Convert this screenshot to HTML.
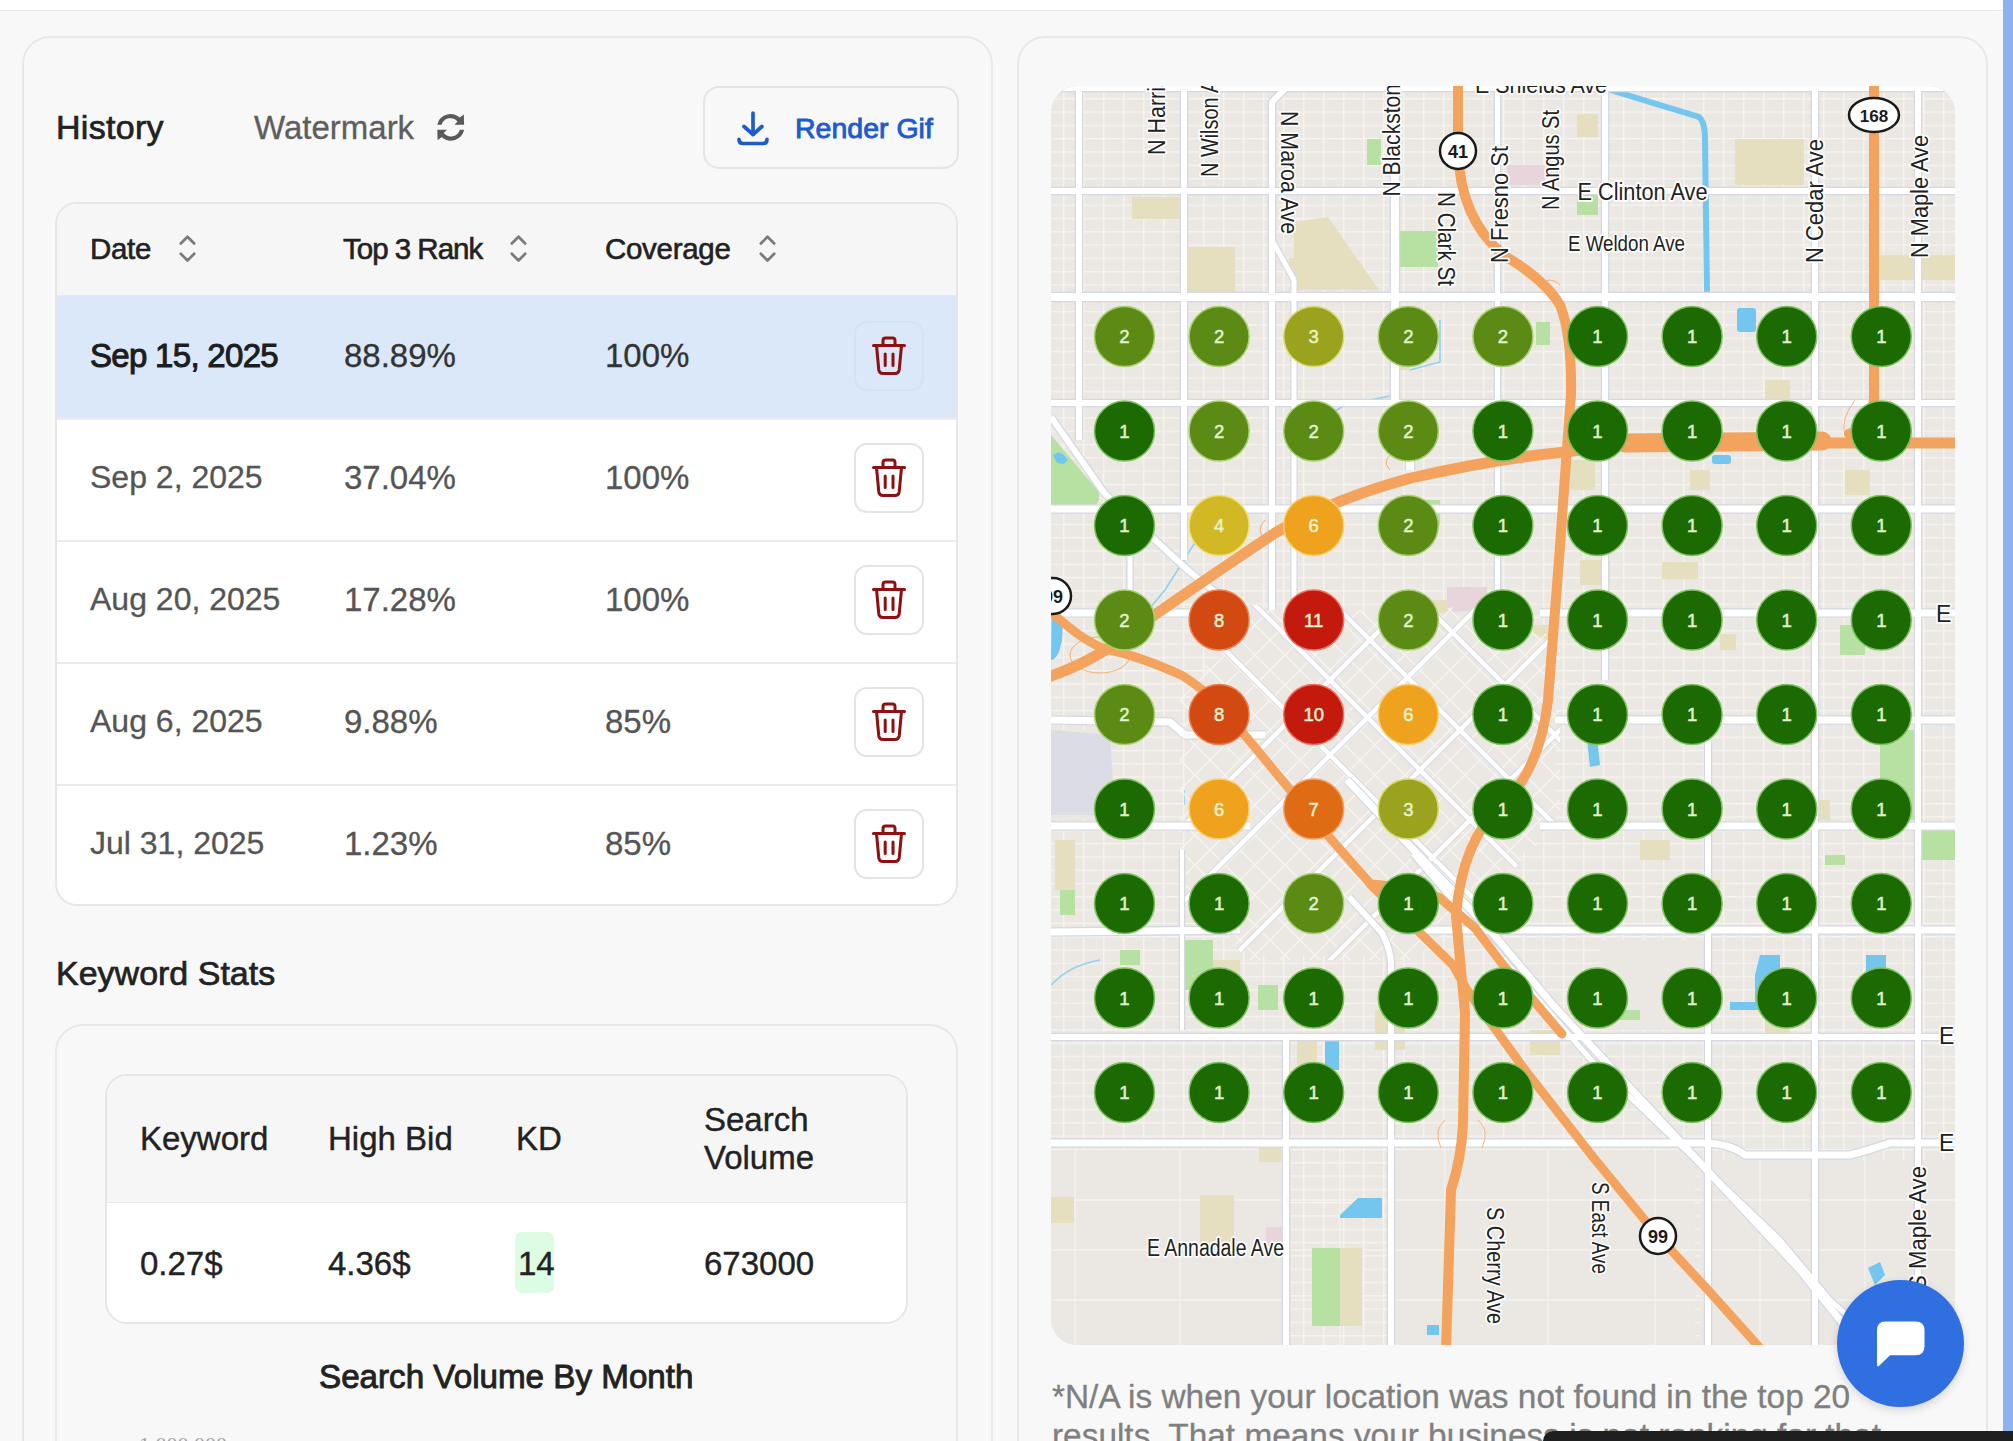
<!DOCTYPE html><html><head><meta charset="utf-8"><style>
html,body{margin:0;padding:0;}
body{width:2013px;height:1441px;overflow:hidden;position:relative;background:#f8f8f8;font-family:"Liberation Sans", sans-serif;}
.t{position:absolute;white-space:nowrap;line-height:1;}
.ab{position:absolute;}
.box{position:absolute;box-sizing:border-box;}
.tbtn{position:absolute;width:70px;height:70px;box-sizing:border-box;border:2px solid #e4e4e4;border-radius:13px;}
</style></head><body>
<div class="box" style="left:0;top:0;width:2013px;height:11px;background:#fff;border-bottom:1.5px solid #e6e6e6"></div>
<div class="box" style="left:22px;top:36px;width:971px;height:1500px;border:2px solid #e8e8e8;border-radius:28px;background:#f8f8f8"></div>
<div class="box" style="left:1017px;top:36px;width:971px;height:1500px;border:2px solid #e8e8e8;border-radius:28px;background:#f8f8f8"></div>
<div class="box" style="left:2003px;top:0;width:10px;height:1441px;background:#8db3ee"></div>
<div class="t" style="left:56px;top:109.7px;font-size:34px;font-weight:400;color:#222;letter-spacing:0.3px;-webkit-text-stroke:0.7px #222;">History</div>
<div class="t" style="left:254px;top:110.6px;font-size:33px;font-weight:400;color:#5e5e5e;letter-spacing:0px;-webkit-text-stroke:0.3px #5e5e5e;">Watermark</div>
<svg class="ab" style="left:430px;top:105px" width="42" height="42" viewBox="0 0 42 42"><g fill="#5a5a5a"><path id="ra" d="M7.3 19.8 A13.4 13.4 0 0 1 29.6 12.6 L33.8 9.4 L34.1 19.8 L24.5 19.8 L27.6 16.6 A9.2 9.2 0 0 0 11.6 19.8 Z"/><path d="M7.3 19.8 A13.4 13.4 0 0 1 29.6 12.6 L33.8 9.4 L34.1 19.8 L24.5 19.8 L27.6 16.6 A9.2 9.2 0 0 0 11.6 19.8 Z" transform="rotate(180 20.7 22.3)"/></g></svg>
<div class="box" style="left:703px;top:86px;width:256px;height:83px;border:2px solid #e4e4e4;border-radius:16px"></div>
<svg class="ab" style="left:733px;top:108px" width="42" height="42" viewBox="0 0 42 42"><g fill="none" stroke="#1f5cc9" stroke-width="3.7" stroke-linecap="round" stroke-linejoin="round"><path d="M20 5.1 V26"/><path d="M11 18.5 L20 26.5 L28.9 18.5"/><path d="M6 31.4 V31.5 Q6 35.5 10 35.5 H30 Q34 35.5 34 31.5 V31.4"/></g></svg>
<div class="t" style="left:795px;top:113.6px;font-size:28.5px;font-weight:400;color:#1f5cc9;letter-spacing:0px;-webkit-text-stroke:0.9px #1f5cc9;">Render Gif</div>
<div class="box" style="left:55px;top:202px;width:903px;height:704px;border:2px solid #e6e6e6;border-radius:22px;background:#fff;overflow:hidden"><div style="position:absolute;left:0;top:0;width:100%;height:91px;background:#f6f6f6;border-bottom:1.5px solid #e8e8e8"></div><div style="position:absolute;left:0;top:92px;width:100%;height:122px;background:#dbe8fa"></div><div style="position:absolute;left:0;top:214px;width:100%;height:2px;background:#ececec"></div><div style="position:absolute;left:0;top:336px;width:100%;height:2px;background:#ececec"></div><div style="position:absolute;left:0;top:458px;width:100%;height:2px;background:#ececec"></div><div style="position:absolute;left:0;top:580px;width:100%;height:2px;background:#ececec"></div></div>
<div class="t" style="left:90px;top:234.0px;font-size:29.5px;font-weight:400;color:#222;letter-spacing:-0.3px;-webkit-text-stroke:0.6px #222;">Date</div>
<svg class="ab" style="left:178px;top:234px" width="18" height="28" viewBox="0 0 18 28"><g fill="none" stroke="#7a7a7a" stroke-width="2.7" stroke-linecap="round" stroke-linejoin="round"><path d="M2.8 9.5 L9.5 2.8 L16.2 9.5"/><path d="M2.8 19.8 L9.5 26.5 L16.2 19.8"/></g></svg>
<div class="t" style="left:343px;top:234.0px;font-size:29.5px;font-weight:400;color:#222;letter-spacing:-1.0px;-webkit-text-stroke:0.6px #222;">Top 3 Rank</div>
<svg class="ab" style="left:509px;top:234px" width="18" height="28" viewBox="0 0 18 28"><g fill="none" stroke="#7a7a7a" stroke-width="2.7" stroke-linecap="round" stroke-linejoin="round"><path d="M2.8 9.5 L9.5 2.8 L16.2 9.5"/><path d="M2.8 19.8 L9.5 26.5 L16.2 19.8"/></g></svg>
<div class="t" style="left:605px;top:234.0px;font-size:29.5px;font-weight:400;color:#222;letter-spacing:-0.3px;-webkit-text-stroke:0.6px #222;">Coverage</div>
<svg class="ab" style="left:758px;top:234px" width="18" height="28" viewBox="0 0 18 28"><g fill="none" stroke="#7a7a7a" stroke-width="2.7" stroke-linecap="round" stroke-linejoin="round"><path d="M2.8 9.5 L9.5 2.8 L16.2 9.5"/><path d="M2.8 19.8 L9.5 26.5 L16.2 19.8"/></g></svg>
<div class="t" style="left:90px;top:338.6px;font-size:33px;font-weight:400;color:#1d1d1f;letter-spacing:-0.7px;-webkit-text-stroke:1.0px #1d1d1f;">Sep 15, 2025</div>
<div class="t" style="left:344px;top:338.6px;font-size:33px;font-weight:400;color:#333;letter-spacing:0px;-webkit-text-stroke:0.3px #333;">88.89%</div>
<div class="t" style="left:605px;top:338.6px;font-size:33px;font-weight:400;color:#333;letter-spacing:0px;-webkit-text-stroke:0.3px #333;">100%</div>
<div class="tbtn" style="left:854px;top:321px;background:transparent;border-color:#d6e2f2"></div>
<svg class="ab" style="left:871px;top:336px" width="36" height="40" viewBox="0 0 36 40"><g fill="none" stroke="#8e1010" stroke-width="3" stroke-linejoin="round" stroke-linecap="round"><path d="M2.5 9.5 H33.5"/><path d="M12 9.5 V4.5 Q12 2 14.5 2 H21.5 Q24 2 24 4.5 V9.5"/><path d="M5.5 9.5 L7.8 34 Q8.3 37.5 12 37.5 H24 Q27.7 37.5 28.2 34 L30.5 9.5"/><path d="M14.2 18 V29.5 M22 18 V29.5"/></g></svg>
<div class="t" style="left:90px;top:461.4px;font-size:32px;font-weight:400;color:#555;letter-spacing:0px;-webkit-text-stroke:0.3px #555;">Sep 2, 2025</div>
<div class="t" style="left:344px;top:460.6px;font-size:33px;font-weight:400;color:#555;letter-spacing:0px;-webkit-text-stroke:0.3px #555;">37.04%</div>
<div class="t" style="left:605px;top:460.6px;font-size:33px;font-weight:400;color:#555;letter-spacing:0px;-webkit-text-stroke:0.3px #555;">100%</div>
<div class="tbtn" style="left:854px;top:443px;background:#fff;border-color:#e4e4e4"></div>
<svg class="ab" style="left:871px;top:458px" width="36" height="40" viewBox="0 0 36 40"><g fill="none" stroke="#8e1010" stroke-width="3" stroke-linejoin="round" stroke-linecap="round"><path d="M2.5 9.5 H33.5"/><path d="M12 9.5 V4.5 Q12 2 14.5 2 H21.5 Q24 2 24 4.5 V9.5"/><path d="M5.5 9.5 L7.8 34 Q8.3 37.5 12 37.5 H24 Q27.7 37.5 28.2 34 L30.5 9.5"/><path d="M14.2 18 V29.5 M22 18 V29.5"/></g></svg>
<div class="t" style="left:90px;top:583.4px;font-size:32px;font-weight:400;color:#555;letter-spacing:0px;-webkit-text-stroke:0.3px #555;">Aug 20, 2025</div>
<div class="t" style="left:344px;top:582.6px;font-size:33px;font-weight:400;color:#555;letter-spacing:0px;-webkit-text-stroke:0.3px #555;">17.28%</div>
<div class="t" style="left:605px;top:582.6px;font-size:33px;font-weight:400;color:#555;letter-spacing:0px;-webkit-text-stroke:0.3px #555;">100%</div>
<div class="tbtn" style="left:854px;top:565px;background:#fff;border-color:#e4e4e4"></div>
<svg class="ab" style="left:871px;top:580px" width="36" height="40" viewBox="0 0 36 40"><g fill="none" stroke="#8e1010" stroke-width="3" stroke-linejoin="round" stroke-linecap="round"><path d="M2.5 9.5 H33.5"/><path d="M12 9.5 V4.5 Q12 2 14.5 2 H21.5 Q24 2 24 4.5 V9.5"/><path d="M5.5 9.5 L7.8 34 Q8.3 37.5 12 37.5 H24 Q27.7 37.5 28.2 34 L30.5 9.5"/><path d="M14.2 18 V29.5 M22 18 V29.5"/></g></svg>
<div class="t" style="left:90px;top:705.4px;font-size:32px;font-weight:400;color:#555;letter-spacing:0px;-webkit-text-stroke:0.3px #555;">Aug 6, 2025</div>
<div class="t" style="left:344px;top:704.6px;font-size:33px;font-weight:400;color:#555;letter-spacing:0px;-webkit-text-stroke:0.3px #555;">9.88%</div>
<div class="t" style="left:605px;top:704.6px;font-size:33px;font-weight:400;color:#555;letter-spacing:0px;-webkit-text-stroke:0.3px #555;">85%</div>
<div class="tbtn" style="left:854px;top:687px;background:#fff;border-color:#e4e4e4"></div>
<svg class="ab" style="left:871px;top:702px" width="36" height="40" viewBox="0 0 36 40"><g fill="none" stroke="#8e1010" stroke-width="3" stroke-linejoin="round" stroke-linecap="round"><path d="M2.5 9.5 H33.5"/><path d="M12 9.5 V4.5 Q12 2 14.5 2 H21.5 Q24 2 24 4.5 V9.5"/><path d="M5.5 9.5 L7.8 34 Q8.3 37.5 12 37.5 H24 Q27.7 37.5 28.2 34 L30.5 9.5"/><path d="M14.2 18 V29.5 M22 18 V29.5"/></g></svg>
<div class="t" style="left:90px;top:827.4px;font-size:32px;font-weight:400;color:#555;letter-spacing:0px;-webkit-text-stroke:0.3px #555;">Jul 31, 2025</div>
<div class="t" style="left:344px;top:826.6px;font-size:33px;font-weight:400;color:#555;letter-spacing:0px;-webkit-text-stroke:0.3px #555;">1.23%</div>
<div class="t" style="left:605px;top:826.6px;font-size:33px;font-weight:400;color:#555;letter-spacing:0px;-webkit-text-stroke:0.3px #555;">85%</div>
<div class="tbtn" style="left:854px;top:809px;background:#fff;border-color:#e4e4e4"></div>
<svg class="ab" style="left:871px;top:824px" width="36" height="40" viewBox="0 0 36 40"><g fill="none" stroke="#8e1010" stroke-width="3" stroke-linejoin="round" stroke-linecap="round"><path d="M2.5 9.5 H33.5"/><path d="M12 9.5 V4.5 Q12 2 14.5 2 H21.5 Q24 2 24 4.5 V9.5"/><path d="M5.5 9.5 L7.8 34 Q8.3 37.5 12 37.5 H24 Q27.7 37.5 28.2 34 L30.5 9.5"/><path d="M14.2 18 V29.5 M22 18 V29.5"/></g></svg>
<div class="t" style="left:56px;top:956.2px;font-size:34px;font-weight:400;color:#222;letter-spacing:0px;-webkit-text-stroke:0.7px #222;">Keyword Stats</div>
<div class="box" style="left:55px;top:1024px;width:903px;height:600px;border:2px solid #e8e8e8;border-radius:28px"></div>
<div class="box" style="left:105px;top:1074px;width:803px;height:250px;border:2px solid #e6e6e6;border-radius:22px;background:#fff;overflow:hidden"><div style="position:absolute;left:0;top:0;width:100%;height:126px;background:#f6f6f6;border-bottom:1.5px solid #e8e8e8"></div></div>
<div class="t" style="left:140px;top:1122.1px;font-size:33px;font-weight:400;color:#222;letter-spacing:0px;-webkit-text-stroke:0.4px #222;">Keyword</div>
<div class="t" style="left:328px;top:1122.1px;font-size:33px;font-weight:400;color:#222;letter-spacing:0px;-webkit-text-stroke:0.4px #222;">High Bid</div>
<div class="t" style="left:516px;top:1122.1px;font-size:33px;font-weight:400;color:#222;letter-spacing:0px;-webkit-text-stroke:0.4px #222;">KD</div>
<div class="t" style="left:704px;top:1103.1px;font-size:33px;font-weight:400;color:#222;letter-spacing:0px;-webkit-text-stroke:0.4px #222;">Search</div>
<div class="t" style="left:704px;top:1141.1px;font-size:33px;font-weight:400;color:#222;letter-spacing:0px;-webkit-text-stroke:0.4px #222;">Volume</div>
<div class="box" style="left:515px;top:1232px;width:39px;height:61px;background:#dcfce4;border-radius:7px"></div>
<div class="t" style="left:140px;top:1247.1px;font-size:33px;font-weight:400;color:#222;letter-spacing:0px;-webkit-text-stroke:0.4px #222;">0.27$</div>
<div class="t" style="left:328px;top:1247.1px;font-size:33px;font-weight:400;color:#222;letter-spacing:0px;-webkit-text-stroke:0.4px #222;">4.36$</div>
<div class="t" style="left:518px;top:1247.1px;font-size:33px;font-weight:400;color:#222;letter-spacing:0px;-webkit-text-stroke:0.4px #222;">14</div>
<div class="t" style="left:704px;top:1247.1px;font-size:33px;font-weight:400;color:#222;letter-spacing:0px;-webkit-text-stroke:0.4px #222;">673000</div>
<div class="t" style="left:319px;top:1360.4px;font-size:33.2px;font-weight:400;color:#222;letter-spacing:0px;-webkit-text-stroke:0.9px #222;">Search Volume By Month</div>
<div class="t" style="left:139px;top:1434.4px;font-size:22px;font-weight:400;color:#a0a0a0;letter-spacing:0px;font-family:'Liberation Serif',serif;">1,000,000</div>
<svg class="ab" style="left:0;top:0" width="2013" height="1441" viewBox="0 0 2013 1441"><defs><clipPath id="mc"><rect x="1051" y="86" width="904" height="1259" rx="26" ry="26"/></clipPath><pattern id="lots" x="3" y="5" width="20" height="13.3" patternUnits="userSpaceOnUse"><path d="M0 0.75 H20 M0.75 0 V13.3" stroke="#f7f5f2" stroke-width="1.5" fill="none"/></pattern><clipPath id="dt"><polygon points="1180,700 1250,605 1400,612 1480,605 1560,640 1560,820 1480,905 1420,960 1250,960 1180,900"/></clipPath></defs><g clip-path="url(#mc)"><rect x="1051" y="86" width="904" height="1259" fill="#ebe7e2"/><rect x="1051" y="86" width="904" height="1259" fill="url(#lots)" opacity="0.9"/><rect x="1051" y="1150" width="235" height="195" fill="#ebe7e2"/><rect x="1395" y="1150" width="300" height="195" fill="#ebe7e2"/><rect x="1700" y="1160" width="255" height="185" fill="#ebe7e2"/><rect x="1600" y="940" width="110" height="90" fill="#ebe7e2"/><rect x="1051" y="730" width="60" height="90" fill="#ebe7e2"/><path d="M1051 1200 H1955" stroke="#f6f3ef" stroke-width="1.3"/><path d="M1051 1250 H1955" stroke="#f6f3ef" stroke-width="1.3"/><path d="M1051 1300 H1955" stroke="#f6f3ef" stroke-width="1.3"/><path d="M1075 1150 V1345" stroke="#f6f3ef" stroke-width="1.3"/><path d="M1180 1150 V1345" stroke="#f6f3ef" stroke-width="1.3"/><path d="M1340 1150 V1345" stroke="#f6f3ef" stroke-width="1.3"/><path d="M1445 1150 V1345" stroke="#f6f3ef" stroke-width="1.3"/><path d="M1548 1150 V1345" stroke="#f6f3ef" stroke-width="1.3"/><path d="M1655 1150 V1345" stroke="#f6f3ef" stroke-width="1.3"/><path d="M1760 1150 V1345" stroke="#f6f3ef" stroke-width="1.3"/><path d="M1865 1150 V1345" stroke="#f6f3ef" stroke-width="1.3"/><polygon points="1051,730 1110,735 1115,815 1051,815" fill="#dcdce6"/><rect x="1132" y="197" width="48" height="22" fill="#e5dfc0"/><rect x="1187" y="247" width="48" height="45" fill="#e5dfc0"/><rect x="1735" y="139" width="69" height="46" fill="#e5dfc0"/><rect x="1577" y="114" width="21" height="23" fill="#e5dfc0"/><rect x="1289" y="258" width="15" height="20" fill="#e5dfc0"/><rect x="1390" y="350" width="20" height="20" fill="#e5dfc0"/><rect x="1570" y="460" width="25" height="30" fill="#e5dfc0"/><rect x="1580" y="560" width="30" height="25" fill="#e5dfc0"/><rect x="1690" y="470" width="20" height="20" fill="#e5dfc0"/><rect x="1880" y="255" width="75" height="25" fill="#e5dfc0"/><rect x="1765" y="380" width="25" height="20" fill="#e5dfc0"/><rect x="1845" y="470" width="25" height="25" fill="#e5dfc0"/><rect x="1662" y="562" width="36" height="17" fill="#e5dfc0"/><rect x="1525" y="625" width="25" height="25" fill="#e5dfc0"/><rect x="1720" y="634" width="16" height="16" fill="#e5dfc0"/><rect x="1700" y="880" width="20" height="25" fill="#e5dfc0"/><rect x="1800" y="800" width="30" height="20" fill="#e5dfc0"/><rect x="1640" y="840" width="30" height="20" fill="#e5dfc0"/><rect x="1220" y="830" width="25" height="30" fill="#e5dfc0"/><rect x="1055" y="840" width="20" height="50" fill="#e5dfc0"/><rect x="1200" y="960" width="40" height="60" fill="#e5dfc0"/><rect x="1375" y="1010" width="30" height="40" fill="#e5dfc0"/><rect x="1200" y="1195" width="34" height="50" fill="#e5dfc0"/><rect x="1051" y="1197" width="23" height="26" fill="#e5dfc0"/><rect x="1259" y="1146" width="22" height="16" fill="#e5dfc0"/><rect x="1297" y="1040" width="20" height="25" fill="#e5dfc0"/><rect x="1340" y="1248" width="22" height="78" fill="#e5dfc0"/><rect x="1765" y="1010" width="25" height="30" fill="#e5dfc0"/><rect x="1430" y="600" width="20" height="15" fill="#e5dfc0"/><rect x="1530" y="1030" width="30" height="25" fill="#e5dfc0"/><rect x="1290" y="725" width="25" height="25" fill="#e5dfc0"/><polygon points="1294,222 1328,217 1379,290 1294,290" fill="#e5dfc0"/><rect x="1367" y="139" width="14" height="26" fill="#b7e1a3"/><rect x="1399" y="231" width="39" height="36" fill="#b7e1a3"/><rect x="1577" y="194" width="21" height="21" fill="#b7e1a3"/><rect x="1536" y="322" width="14" height="23" fill="#b7e1a3"/><rect x="1840" y="625" width="25" height="30" fill="#b7e1a3"/><rect x="1880" y="730" width="35" height="90" fill="#b7e1a3"/><rect x="1920" y="830" width="35" height="30" fill="#b7e1a3"/><rect x="1600" y="1010" width="40" height="10" fill="#b7e1a3"/><rect x="1183" y="940" width="30" height="50" fill="#b7e1a3"/><rect x="1312" y="1248" width="28" height="78" fill="#b7e1a3"/><rect x="1415" y="500" width="25" height="25" fill="#b7e1a3"/><rect x="1060" y="890" width="15" height="25" fill="#b7e1a3"/><rect x="1825" y="855" width="20" height="10" fill="#b7e1a3"/><rect x="1120" y="950" width="20" height="15" fill="#b7e1a3"/><rect x="1258" y="985" width="20" height="25" fill="#b7e1a3"/><polygon points="1051,435 1099,492 1099,500 1095,507 1051,507" fill="#b7e1a3"/><path d="M1053 455 l6 -3 l5 3 l4 5 l-4 4 l-7 -1 z" fill="#74c6ee"/><rect x="1507" y="165" width="38" height="20" fill="#e8d5dc"/><rect x="1447" y="587" width="40" height="38" fill="#e8d5dc"/><rect x="1266" y="1227" width="16" height="18" fill="#e8d5dc"/><path d="M1607 89 L1699 117 Q1705 122 1705 139 L1707 292" stroke="#74c6ee" stroke-width="6" fill="none"/><rect x="1737" y="308" width="19" height="24" rx="3" fill="#74c6ee"/><rect x="1712" y="455" width="19" height="9" rx="3" fill="#74c6ee"/><path d="M1340 1215 L1358 1198 H1382 V1218 H1340 Z" fill="#74c6ee"/><rect x="1325" y="1040" width="14" height="30" fill="#74c6ee"/><path d="M1760 955 H1780 V985 H1775 V1010 H1730 V1002 H1755 V975 Z" fill="#74c6ee"/><rect x="1866" y="955" width="20" height="20" fill="#74c6ee"/><path d="M1052 590 Q1065 610 1062 640 Q1058 660 1051 660 Z" fill="#74c6ee"/><path d="M1587 740 L1597 738 L1600 765 L1590 767 Z" fill="#74c6ee"/><rect x="1427" y="1325" width="12" height="10" fill="#74c6ee"/><path d="M1868 1268 L1880 1262 L1885 1275 L1875 1285 Z" fill="#74c6ee"/><path d="M1051 985 Q1070 965 1100 960 M1185 790 V805 M1203 530 L1165 590 L1140 620 M1320 420 L1345 405 L1390 396 M1410 370 L1440 362 V320" stroke="#8fd0f0" stroke-width="1.5" fill="none"/><polygon points="1185,705 1252,612 1400,616 1480,610 1556,644 1556,818 1478,902 1418,956 1252,956 1185,898" fill="#ebe7e2"/><g clip-path="url(#dt)" fill="none" stroke-linecap="butt"><path d="M850 1000 L1350 500" stroke="#f7f5f2" stroke-width="1.4"/><path d="M880 1000 L1380 500" stroke="#f7f5f2" stroke-width="1.4"/><path d="M910 1000 L1410 500" stroke="#f7f5f2" stroke-width="1.4"/><path d="M940 1000 L1440 500" stroke="#f7f5f2" stroke-width="1.4"/><path d="M970 1000 L1470 500" stroke="#f7f5f2" stroke-width="1.4"/><path d="M1000 1000 L1500 500" stroke="#f7f5f2" stroke-width="1.4"/><path d="M1030 1000 L1530 500" stroke="#f7f5f2" stroke-width="1.4"/><path d="M1060 1000 L1560 500" stroke="#f7f5f2" stroke-width="1.4"/><path d="M1090 1000 L1590 500" stroke="#f7f5f2" stroke-width="1.4"/><path d="M1120 1000 L1620 500" stroke="#f7f5f2" stroke-width="1.4"/><path d="M1150 1000 L1650 500" stroke="#f7f5f2" stroke-width="1.4"/><path d="M1180 1000 L1680 500" stroke="#f7f5f2" stroke-width="1.4"/><path d="M1210 1000 L1710 500" stroke="#f7f5f2" stroke-width="1.4"/><path d="M1240 1000 L1740 500" stroke="#f7f5f2" stroke-width="1.4"/><path d="M1270 1000 L1770 500" stroke="#f7f5f2" stroke-width="1.4"/><path d="M1300 1000 L1800 500" stroke="#f7f5f2" stroke-width="1.4"/><path d="M1330 1000 L1830 500" stroke="#f7f5f2" stroke-width="1.4"/><path d="M1360 1000 L1860 500" stroke="#f7f5f2" stroke-width="1.4"/><path d="M1390 1000 L1890 500" stroke="#f7f5f2" stroke-width="1.4"/><path d="M1420 1000 L1920 500" stroke="#f7f5f2" stroke-width="1.4"/><path d="M800 500 L1300 1000" stroke="#f7f5f2" stroke-width="1.4"/><path d="M830 500 L1330 1000" stroke="#f7f5f2" stroke-width="1.4"/><path d="M860 500 L1360 1000" stroke="#f7f5f2" stroke-width="1.4"/><path d="M890 500 L1390 1000" stroke="#f7f5f2" stroke-width="1.4"/><path d="M920 500 L1420 1000" stroke="#f7f5f2" stroke-width="1.4"/><path d="M950 500 L1450 1000" stroke="#f7f5f2" stroke-width="1.4"/><path d="M980 500 L1480 1000" stroke="#f7f5f2" stroke-width="1.4"/><path d="M1010 500 L1510 1000" stroke="#f7f5f2" stroke-width="1.4"/><path d="M1040 500 L1540 1000" stroke="#f7f5f2" stroke-width="1.4"/><path d="M1070 500 L1570 1000" stroke="#f7f5f2" stroke-width="1.4"/><path d="M1100 500 L1600 1000" stroke="#f7f5f2" stroke-width="1.4"/><path d="M1130 500 L1630 1000" stroke="#f7f5f2" stroke-width="1.4"/><path d="M1160 500 L1660 1000" stroke="#f7f5f2" stroke-width="1.4"/><path d="M1190 500 L1690 1000" stroke="#f7f5f2" stroke-width="1.4"/><path d="M1220 500 L1720 1000" stroke="#f7f5f2" stroke-width="1.4"/><path d="M1250 500 L1750 1000" stroke="#f7f5f2" stroke-width="1.4"/><path d="M1280 500 L1780 1000" stroke="#f7f5f2" stroke-width="1.4"/><path d="M1310 500 L1810 1000" stroke="#f7f5f2" stroke-width="1.4"/><path d="M1340 500 L1840 1000" stroke="#f7f5f2" stroke-width="1.4"/><path d="M1370 500 L1870 1000" stroke="#f7f5f2" stroke-width="1.4"/><path d="M1400 500 L1900 1000" stroke="#f7f5f2" stroke-width="1.4"/><path d="M1430 500 L1930 1000" stroke="#f7f5f2" stroke-width="1.4"/><path d="M1460 500 L1960 1000" stroke="#f7f5f2" stroke-width="1.4"/><path d="M1490 500 L1990 1000" stroke="#f7f5f2" stroke-width="1.4"/><path d="M1010 1000 L1510 500" stroke="#d5d8e3" stroke-width="6.5"/><path d="M1085 1000 L1585 500" stroke="#d5d8e3" stroke-width="6.5"/><path d="M1190 1000 L1690 500" stroke="#d5d8e3" stroke-width="6.5"/><path d="M1290 1000 L1790 500" stroke="#d5d8e3" stroke-width="6.5"/><path d="M1075 500 L1575 1000" stroke="#d5d8e3" stroke-width="6.5"/><path d="M1150 500 L1650 1000" stroke="#d5d8e3" stroke-width="6.5"/><path d="M1230 500 L1730 1000" stroke="#d5d8e3" stroke-width="6.5"/><path d="M1320 500 L1820 1000" stroke="#d5d8e3" stroke-width="6.5"/><path d="M1010 1000 L1510 500" stroke="#ffffff" stroke-width="4.5"/><path d="M1085 1000 L1585 500" stroke="#ffffff" stroke-width="4.5"/><path d="M1190 1000 L1690 500" stroke="#ffffff" stroke-width="4.5"/><path d="M1290 1000 L1790 500" stroke="#ffffff" stroke-width="4.5"/><path d="M1075 500 L1575 1000" stroke="#ffffff" stroke-width="4.5"/><path d="M1150 500 L1650 1000" stroke="#ffffff" stroke-width="4.5"/><path d="M1230 500 L1730 1000" stroke="#ffffff" stroke-width="4.5"/><path d="M1320 500 L1820 1000" stroke="#ffffff" stroke-width="4.5"/></g><path d="M1051 88 H1955" stroke="#d5d8e3" stroke-width="8.5" fill="none" stroke-linejoin="round"/><path d="M1051 191 H1955" stroke="#d5d8e3" stroke-width="8.5" fill="none" stroke-linejoin="round"/><path d="M1051 297 H1955" stroke="#d5d8e3" stroke-width="10.5" fill="none" stroke-linejoin="round"/><path d="M1051 403 H1955" stroke="#d5d8e3" stroke-width="8.5" fill="none" stroke-linejoin="round"/><path d="M1051 509 H1955" stroke="#d5d8e3" stroke-width="9.5" fill="none" stroke-linejoin="round"/><path d="M1051 613 H1190 M1540 613 H1955" stroke="#d5d8e3" stroke-width="9.5" fill="none" stroke-linejoin="round"/><path d="M1051 720 L1170 722 L1185 735 L1265 735 M1555 720 H1955" stroke="#d5d8e3" stroke-width="9.5" fill="none" stroke-linejoin="round"/><path d="M1051 826 H1250 M1540 826 H1955" stroke="#d5d8e3" stroke-width="9.5" fill="none" stroke-linejoin="round"/><path d="M1051 932 L1240 930 M1395 930 H1955" stroke="#d5d8e3" stroke-width="9.5" fill="none" stroke-linejoin="round"/><path d="M1051 1037 H1955" stroke="#d5d8e3" stroke-width="8.5" fill="none" stroke-linejoin="round"/><path d="M1051 1143 H1700 Q1730 1143 1745 1155 L1850 1155 Q1870 1150 1890 1143 H1955" stroke="#d5d8e3" stroke-width="9.5" fill="none" stroke-linejoin="round"/><path d="M1079 86 V440" stroke="#d5d8e3" stroke-width="8.5" fill="none" stroke-linejoin="round"/><path d="M1130 554 V612" stroke="#d5d8e3" stroke-width="7.5" fill="none" stroke-linejoin="round"/><path d="M1184 86 V560" stroke="#d5d8e3" stroke-width="8.5" fill="none" stroke-linejoin="round"/><path d="M1288 86 L1272 102 V610" stroke="#d5d8e3" stroke-width="8.5" fill="none" stroke-linejoin="round"/><path d="M1272 240 L1294 280 V600" stroke="#d5d8e3" stroke-width="7.5" fill="none" stroke-linejoin="round"/><path d="M1395 86 V420 L1410 440 V470" stroke="#d5d8e3" stroke-width="10.5" fill="none" stroke-linejoin="round"/><path d="M1497.5 86 V600" stroke="#d5d8e3" stroke-width="7.5" fill="none" stroke-linejoin="round"/><path d="M1605 86 V680" stroke="#d5d8e3" stroke-width="8.5" fill="none" stroke-linejoin="round"/><path d="M1708 740 V1345" stroke="#d5d8e3" stroke-width="8.5" fill="none" stroke-linejoin="round"/><path d="M1815 86 V1345" stroke="#d5d8e3" stroke-width="8.5" fill="none" stroke-linejoin="round"/><path d="M1918 86 V1345" stroke="#d5d8e3" stroke-width="8.5" fill="none" stroke-linejoin="round"/><path d="M1286 1037 V1345" stroke="#d5d8e3" stroke-width="8.5" fill="none" stroke-linejoin="round"/><path d="M1391 960 V1345" stroke="#d5d8e3" stroke-width="8.5" fill="none" stroke-linejoin="round"/><path d="M1349 897 L1382 933 Q1391 950 1391 965" stroke="#d5d8e3" stroke-width="8.5" fill="none" stroke-linejoin="round"/><path d="M1182 850 V1030" stroke="#d5d8e3" stroke-width="6.5" fill="none" stroke-linejoin="round"/><path d="M1051 417 L1105 494 L1191 573 L1245 615" stroke="#d5d8e3" stroke-width="8.5" fill="none" stroke-linejoin="round"/><path d="M1347 780 L1490 930 L1553 1005 L1800 1270 L1860 1345" stroke="#d5d8e3" stroke-width="9.5" fill="none" stroke-linejoin="round"/><path d="M1413 854 L1448 895 L1591 1060 L1780 1240 L1830 1300 L1880 1345" stroke="#d5d8e3" stroke-width="7.5" fill="none" stroke-linejoin="round"/><path d="M1051 88 H1955" stroke="#ffffff" stroke-width="6" fill="none" stroke-linejoin="round"/><path d="M1051 191 H1955" stroke="#ffffff" stroke-width="6" fill="none" stroke-linejoin="round"/><path d="M1051 297 H1955" stroke="#ffffff" stroke-width="8" fill="none" stroke-linejoin="round"/><path d="M1051 403 H1955" stroke="#ffffff" stroke-width="6" fill="none" stroke-linejoin="round"/><path d="M1051 509 H1955" stroke="#ffffff" stroke-width="7" fill="none" stroke-linejoin="round"/><path d="M1051 613 H1190 M1540 613 H1955" stroke="#ffffff" stroke-width="7" fill="none" stroke-linejoin="round"/><path d="M1051 720 L1170 722 L1185 735 L1265 735 M1555 720 H1955" stroke="#ffffff" stroke-width="7" fill="none" stroke-linejoin="round"/><path d="M1051 826 H1250 M1540 826 H1955" stroke="#ffffff" stroke-width="7" fill="none" stroke-linejoin="round"/><path d="M1051 932 L1240 930 M1395 930 H1955" stroke="#ffffff" stroke-width="7" fill="none" stroke-linejoin="round"/><path d="M1051 1037 H1955" stroke="#ffffff" stroke-width="6" fill="none" stroke-linejoin="round"/><path d="M1051 1143 H1700 Q1730 1143 1745 1155 L1850 1155 Q1870 1150 1890 1143 H1955" stroke="#ffffff" stroke-width="7" fill="none" stroke-linejoin="round"/><path d="M1079 86 V440" stroke="#ffffff" stroke-width="6" fill="none" stroke-linejoin="round"/><path d="M1130 554 V612" stroke="#ffffff" stroke-width="5" fill="none" stroke-linejoin="round"/><path d="M1184 86 V560" stroke="#ffffff" stroke-width="6" fill="none" stroke-linejoin="round"/><path d="M1288 86 L1272 102 V610" stroke="#ffffff" stroke-width="6" fill="none" stroke-linejoin="round"/><path d="M1272 240 L1294 280 V600" stroke="#ffffff" stroke-width="5" fill="none" stroke-linejoin="round"/><path d="M1395 86 V420 L1410 440 V470" stroke="#ffffff" stroke-width="8" fill="none" stroke-linejoin="round"/><path d="M1497.5 86 V600" stroke="#ffffff" stroke-width="5" fill="none" stroke-linejoin="round"/><path d="M1605 86 V680" stroke="#ffffff" stroke-width="6" fill="none" stroke-linejoin="round"/><path d="M1708 740 V1345" stroke="#ffffff" stroke-width="6" fill="none" stroke-linejoin="round"/><path d="M1815 86 V1345" stroke="#ffffff" stroke-width="6" fill="none" stroke-linejoin="round"/><path d="M1918 86 V1345" stroke="#ffffff" stroke-width="6" fill="none" stroke-linejoin="round"/><path d="M1286 1037 V1345" stroke="#ffffff" stroke-width="6" fill="none" stroke-linejoin="round"/><path d="M1391 960 V1345" stroke="#ffffff" stroke-width="6" fill="none" stroke-linejoin="round"/><path d="M1349 897 L1382 933 Q1391 950 1391 965" stroke="#ffffff" stroke-width="6" fill="none" stroke-linejoin="round"/><path d="M1182 850 V1030" stroke="#ffffff" stroke-width="4" fill="none" stroke-linejoin="round"/><path d="M1051 417 L1105 494 L1191 573 L1245 615" stroke="#ffffff" stroke-width="6" fill="none" stroke-linejoin="round"/><path d="M1347 780 L1490 930 L1553 1005 L1800 1270 L1860 1345" stroke="#ffffff" stroke-width="7" fill="none" stroke-linejoin="round"/><path d="M1413 854 L1448 895 L1591 1060 L1780 1240 L1830 1300 L1880 1345" stroke="#ffffff" stroke-width="5" fill="none" stroke-linejoin="round"/><path d="M1458 80 V150 Q1460 220 1505 256 Q1545 280 1560 305 Q1572 335 1571 395 L1567 448 L1559 560 L1548 700 Q1540 770 1502 805 Q1462 840 1456 916 L1465 1013 L1463 1125 Q1461 1160 1451 1190 L1446 1350" stroke="#f4a35e" stroke-width="10" fill="none" stroke-linecap="round" stroke-linejoin="round"/><path d="M1045 678 Q1095 662 1139 626 Q1200 583 1275 533 Q1330 500 1411 478 Q1500 458 1566 452 L1625 443 H1955" stroke="#f4a35e" stroke-width="11" fill="none" stroke-linecap="round" stroke-linejoin="round"/><path d="M1625 443 L1822 441" stroke="#f4a35e" stroke-width="19" fill="none" stroke-linecap="round" stroke-linejoin="round"/><path d="M1874 80 V400 Q1872 425 1849 434" stroke="#f4a35e" stroke-width="10" fill="none" stroke-linecap="round" stroke-linejoin="round"/><path d="M1045 606 Q1080 640 1105 649 Q1140 656 1183 676 Q1220 700 1243 733 L1330 838 L1374 888 L1420 933 L1453 965 L1467 990 L1525 1070 L1593 1157 L1657 1235 L1708 1290 L1760 1348" stroke="#f4a35e" stroke-width="9" fill="none" stroke-linecap="round" stroke-linejoin="round"/><path d="M1370 884 Q1420 888 1440 898 L1475 928 L1504 966 L1562 1034" stroke="#f4a35e" stroke-width="9" fill="none" stroke-linecap="round" stroke-linejoin="round"/><g stroke="#f4a35e" stroke-width="1" fill="none" opacity="0.8"><ellipse cx="1100" cy="655" rx="30" ry="18"/><path d="M1265 540 q-10 -10 0 -20 M1390 470 q-10 -10 5 -18 M1540 285 q10 -10 20 0 M1855 400 q-15 20 -10 35 M1890 400 q15 20 10 35 M1445 1120 q-12 10 -4 28 M1478 1120 q12 10 4 28"/></g><text x="1475" y="93" textLength="132" lengthAdjust="spacingAndGlyphs" font-family="Liberation Sans, sans-serif" font-size="23" fill="#222" stroke="#fff" stroke-width="3.5" paint-order="stroke" stroke-linejoin="round" text-anchor="start">E Shields Ave</text><text x="1165" y="155" transform="rotate(-90 1165 155)" textLength="105" lengthAdjust="spacingAndGlyphs" font-family="Liberation Sans, sans-serif" font-size="23" fill="#222" stroke="#fff" stroke-width="3.5" paint-order="stroke" stroke-linejoin="round" text-anchor="start">N Harris St</text><text x="1217.5" y="177" transform="rotate(-90 1217.5 177)" textLength="118" lengthAdjust="spacingAndGlyphs" font-family="Liberation Sans, sans-serif" font-size="23" fill="#222" stroke="#fff" stroke-width="3.5" paint-order="stroke" stroke-linejoin="round" text-anchor="start">N Wilson Ave</text><text x="1281" y="111" transform="rotate(90 1281 111)" textLength="123" lengthAdjust="spacingAndGlyphs" font-family="Liberation Sans, sans-serif" font-size="23" fill="#222" stroke="#fff" stroke-width="3.5" paint-order="stroke" stroke-linejoin="round" text-anchor="start">N Maroa Ave</text><text x="1400" y="196.5" transform="rotate(-90 1400 196.5)" textLength="165" lengthAdjust="spacingAndGlyphs" font-family="Liberation Sans, sans-serif" font-size="23" fill="#222" stroke="#fff" stroke-width="3.5" paint-order="stroke" stroke-linejoin="round" text-anchor="start">N Blackstone Ave</text><text x="1438" y="192" transform="rotate(90 1438 192)" textLength="94" lengthAdjust="spacingAndGlyphs" font-family="Liberation Sans, sans-serif" font-size="23" fill="#222" stroke="#fff" stroke-width="3.5" paint-order="stroke" stroke-linejoin="round" text-anchor="start">N Clark St</text><text x="1508" y="263" transform="rotate(-90 1508 263)" textLength="117" lengthAdjust="spacingAndGlyphs" font-family="Liberation Sans, sans-serif" font-size="23" fill="#222" stroke="#fff" stroke-width="3.5" paint-order="stroke" stroke-linejoin="round" text-anchor="start">N Fresno St</text><text x="1559" y="210" transform="rotate(-90 1559 210)" textLength="100" lengthAdjust="spacingAndGlyphs" font-family="Liberation Sans, sans-serif" font-size="23" fill="#222" stroke="#fff" stroke-width="3.5" paint-order="stroke" stroke-linejoin="round" text-anchor="start">N Angus St</text><text x="1577.5" y="199.7" textLength="130" lengthAdjust="spacingAndGlyphs" font-family="Liberation Sans, sans-serif" font-size="23" fill="#222" stroke="#fff" stroke-width="3.5" paint-order="stroke" stroke-linejoin="round" text-anchor="start">E Clinton Ave</text><text x="1568" y="251" textLength="117" lengthAdjust="spacingAndGlyphs" font-family="Liberation Sans, sans-serif" font-size="22" fill="#222" stroke="#fff" stroke-width="3.5" paint-order="stroke" stroke-linejoin="round" text-anchor="start">E Weldon Ave</text><text x="1823" y="263" transform="rotate(-90 1823 263)" textLength="124" lengthAdjust="spacingAndGlyphs" font-family="Liberation Sans, sans-serif" font-size="23" fill="#222" stroke="#fff" stroke-width="3.5" paint-order="stroke" stroke-linejoin="round" text-anchor="start">N Cedar Ave</text><text x="1928" y="258" transform="rotate(-90 1928 258)" textLength="123" lengthAdjust="spacingAndGlyphs" font-family="Liberation Sans, sans-serif" font-size="23" fill="#222" stroke="#fff" stroke-width="3.5" paint-order="stroke" stroke-linejoin="round" text-anchor="start">N Maple Ave</text><text x="1936" y="622" font-family="Liberation Sans, sans-serif" font-size="23" fill="#222" stroke="#fff" stroke-width="3.5" paint-order="stroke" stroke-linejoin="round" text-anchor="start">E</text><text x="1939" y="1044" font-family="Liberation Sans, sans-serif" font-size="23" fill="#222" stroke="#fff" stroke-width="3.5" paint-order="stroke" stroke-linejoin="round" text-anchor="start">E</text><text x="1939" y="1151" font-family="Liberation Sans, sans-serif" font-size="23" fill="#222" stroke="#fff" stroke-width="3.5" paint-order="stroke" stroke-linejoin="round" text-anchor="start">E</text><text x="1147" y="1256" textLength="137" lengthAdjust="spacingAndGlyphs" font-family="Liberation Sans, sans-serif" font-size="23" fill="#222" stroke="#fff" stroke-width="3.5" paint-order="stroke" stroke-linejoin="round" text-anchor="start">E Annadale Ave</text><text x="1487" y="1207" transform="rotate(90 1487 1207)" textLength="117" lengthAdjust="spacingAndGlyphs" font-family="Liberation Sans, sans-serif" font-size="23" fill="#222" stroke="#fff" stroke-width="3.5" paint-order="stroke" stroke-linejoin="round" text-anchor="start">S Cherry Ave</text><text x="1592" y="1182" transform="rotate(90 1592 1182)" textLength="92" lengthAdjust="spacingAndGlyphs" font-family="Liberation Sans, sans-serif" font-size="23" fill="#222" stroke="#fff" stroke-width="3.5" paint-order="stroke" stroke-linejoin="round" text-anchor="start">S East Ave</text><text x="1926" y="1290" transform="rotate(-90 1926 1290)" textLength="124" lengthAdjust="spacingAndGlyphs" font-family="Liberation Sans, sans-serif" font-size="23" fill="#222" stroke="#fff" stroke-width="3.5" paint-order="stroke" stroke-linejoin="round" text-anchor="start">S Maple Ave</text><ellipse cx="1458" cy="151" rx="18" ry="18" fill="#fff" stroke="#1a1a1a" stroke-width="2.5"/><text x="1458" y="157.5" font-family="Liberation Sans, sans-serif" font-size="18" font-weight="700" fill="#1a1a1a" text-anchor="middle">41</text><ellipse cx="1874" cy="115" rx="25" ry="17" fill="#fff" stroke="#1a1a1a" stroke-width="2.5"/><text x="1874" y="121.5" font-family="Liberation Sans, sans-serif" font-size="17" font-weight="700" fill="#1a1a1a" text-anchor="middle">168</text><ellipse cx="1053" cy="596" rx="18" ry="18" fill="#fff" stroke="#1a1a1a" stroke-width="2.5"/><text x="1053" y="602.5" font-family="Liberation Sans, sans-serif" font-size="18" font-weight="700" fill="#1a1a1a" text-anchor="middle">99</text><ellipse cx="1658" cy="1236" rx="18" ry="18" fill="#fff" stroke="#1a1a1a" stroke-width="2.5"/><text x="1658" y="1242.5" font-family="Liberation Sans, sans-serif" font-size="18" font-weight="700" fill="#1a1a1a" text-anchor="middle">99</text><circle cx="1124.5" cy="336.5" r="30" fill="#5b8a15" stroke="#a8d070" stroke-width="1.5"/><text x="1124.5" y="343.0" font-family="Liberation Sans, sans-serif" font-size="18.5" fill="#e4f2cf" stroke="#e4f2cf" stroke-width="0.5" text-anchor="middle">2</text><circle cx="1219.1" cy="336.5" r="30" fill="#5b8a15" stroke="#a8d070" stroke-width="1.5"/><text x="1219.1" y="343.0" font-family="Liberation Sans, sans-serif" font-size="18.5" fill="#e4f2cf" stroke="#e4f2cf" stroke-width="0.5" text-anchor="middle">2</text><circle cx="1313.7" cy="336.5" r="30" fill="#9aa21e" stroke="#d8dc70" stroke-width="1.5"/><text x="1313.7" y="343.0" font-family="Liberation Sans, sans-serif" font-size="18.5" fill="#e4f2cf" stroke="#e4f2cf" stroke-width="0.5" text-anchor="middle">3</text><circle cx="1408.3" cy="336.5" r="30" fill="#5b8a15" stroke="#a8d070" stroke-width="1.5"/><text x="1408.3" y="343.0" font-family="Liberation Sans, sans-serif" font-size="18.5" fill="#e4f2cf" stroke="#e4f2cf" stroke-width="0.5" text-anchor="middle">2</text><circle cx="1502.9" cy="336.5" r="30" fill="#5b8a15" stroke="#a8d070" stroke-width="1.5"/><text x="1502.9" y="343.0" font-family="Liberation Sans, sans-serif" font-size="18.5" fill="#e4f2cf" stroke="#e4f2cf" stroke-width="0.5" text-anchor="middle">2</text><circle cx="1597.5" cy="336.5" r="30" fill="#1b6a02" stroke="#7fc160" stroke-width="1.5"/><text x="1597.5" y="343.0" font-family="Liberation Sans, sans-serif" font-size="18.5" fill="#e4f2cf" stroke="#e4f2cf" stroke-width="0.5" text-anchor="middle">1</text><circle cx="1692.1" cy="336.5" r="30" fill="#1b6a02" stroke="#7fc160" stroke-width="1.5"/><text x="1692.1" y="343.0" font-family="Liberation Sans, sans-serif" font-size="18.5" fill="#e4f2cf" stroke="#e4f2cf" stroke-width="0.5" text-anchor="middle">1</text><circle cx="1786.7" cy="336.5" r="30" fill="#1b6a02" stroke="#7fc160" stroke-width="1.5"/><text x="1786.7" y="343.0" font-family="Liberation Sans, sans-serif" font-size="18.5" fill="#e4f2cf" stroke="#e4f2cf" stroke-width="0.5" text-anchor="middle">1</text><circle cx="1881.3" cy="336.5" r="30" fill="#1b6a02" stroke="#7fc160" stroke-width="1.5"/><text x="1881.3" y="343.0" font-family="Liberation Sans, sans-serif" font-size="18.5" fill="#e4f2cf" stroke="#e4f2cf" stroke-width="0.5" text-anchor="middle">1</text><circle cx="1124.5" cy="431.0" r="30" fill="#1b6a02" stroke="#7fc160" stroke-width="1.5"/><text x="1124.5" y="437.5" font-family="Liberation Sans, sans-serif" font-size="18.5" fill="#e4f2cf" stroke="#e4f2cf" stroke-width="0.5" text-anchor="middle">1</text><circle cx="1219.1" cy="431.0" r="30" fill="#5b8a15" stroke="#a8d070" stroke-width="1.5"/><text x="1219.1" y="437.5" font-family="Liberation Sans, sans-serif" font-size="18.5" fill="#e4f2cf" stroke="#e4f2cf" stroke-width="0.5" text-anchor="middle">2</text><circle cx="1313.7" cy="431.0" r="30" fill="#5b8a15" stroke="#a8d070" stroke-width="1.5"/><text x="1313.7" y="437.5" font-family="Liberation Sans, sans-serif" font-size="18.5" fill="#e4f2cf" stroke="#e4f2cf" stroke-width="0.5" text-anchor="middle">2</text><circle cx="1408.3" cy="431.0" r="30" fill="#5b8a15" stroke="#a8d070" stroke-width="1.5"/><text x="1408.3" y="437.5" font-family="Liberation Sans, sans-serif" font-size="18.5" fill="#e4f2cf" stroke="#e4f2cf" stroke-width="0.5" text-anchor="middle">2</text><circle cx="1502.9" cy="431.0" r="30" fill="#1b6a02" stroke="#7fc160" stroke-width="1.5"/><text x="1502.9" y="437.5" font-family="Liberation Sans, sans-serif" font-size="18.5" fill="#e4f2cf" stroke="#e4f2cf" stroke-width="0.5" text-anchor="middle">1</text><circle cx="1597.5" cy="431.0" r="30" fill="#1b6a02" stroke="#7fc160" stroke-width="1.5"/><text x="1597.5" y="437.5" font-family="Liberation Sans, sans-serif" font-size="18.5" fill="#e4f2cf" stroke="#e4f2cf" stroke-width="0.5" text-anchor="middle">1</text><circle cx="1692.1" cy="431.0" r="30" fill="#1b6a02" stroke="#7fc160" stroke-width="1.5"/><text x="1692.1" y="437.5" font-family="Liberation Sans, sans-serif" font-size="18.5" fill="#e4f2cf" stroke="#e4f2cf" stroke-width="0.5" text-anchor="middle">1</text><circle cx="1786.7" cy="431.0" r="30" fill="#1b6a02" stroke="#7fc160" stroke-width="1.5"/><text x="1786.7" y="437.5" font-family="Liberation Sans, sans-serif" font-size="18.5" fill="#e4f2cf" stroke="#e4f2cf" stroke-width="0.5" text-anchor="middle">1</text><circle cx="1881.3" cy="431.0" r="30" fill="#1b6a02" stroke="#7fc160" stroke-width="1.5"/><text x="1881.3" y="437.5" font-family="Liberation Sans, sans-serif" font-size="18.5" fill="#e4f2cf" stroke="#e4f2cf" stroke-width="0.5" text-anchor="middle">1</text><circle cx="1124.5" cy="525.5" r="30" fill="#1b6a02" stroke="#7fc160" stroke-width="1.5"/><text x="1124.5" y="532.0" font-family="Liberation Sans, sans-serif" font-size="18.5" fill="#e4f2cf" stroke="#e4f2cf" stroke-width="0.5" text-anchor="middle">1</text><circle cx="1219.1" cy="525.5" r="30" fill="#d1b824" stroke="#f0e070" stroke-width="1.5"/><text x="1219.1" y="532.0" font-family="Liberation Sans, sans-serif" font-size="18.5" fill="#e4f2cf" stroke="#e4f2cf" stroke-width="0.5" text-anchor="middle">4</text><circle cx="1313.7" cy="525.5" r="30" fill="#eea21e" stroke="#f8d070" stroke-width="1.5"/><text x="1313.7" y="532.0" font-family="Liberation Sans, sans-serif" font-size="18.5" fill="#e4f2cf" stroke="#e4f2cf" stroke-width="0.5" text-anchor="middle">6</text><circle cx="1408.3" cy="525.5" r="30" fill="#5b8a15" stroke="#a8d070" stroke-width="1.5"/><text x="1408.3" y="532.0" font-family="Liberation Sans, sans-serif" font-size="18.5" fill="#e4f2cf" stroke="#e4f2cf" stroke-width="0.5" text-anchor="middle">2</text><circle cx="1502.9" cy="525.5" r="30" fill="#1b6a02" stroke="#7fc160" stroke-width="1.5"/><text x="1502.9" y="532.0" font-family="Liberation Sans, sans-serif" font-size="18.5" fill="#e4f2cf" stroke="#e4f2cf" stroke-width="0.5" text-anchor="middle">1</text><circle cx="1597.5" cy="525.5" r="30" fill="#1b6a02" stroke="#7fc160" stroke-width="1.5"/><text x="1597.5" y="532.0" font-family="Liberation Sans, sans-serif" font-size="18.5" fill="#e4f2cf" stroke="#e4f2cf" stroke-width="0.5" text-anchor="middle">1</text><circle cx="1692.1" cy="525.5" r="30" fill="#1b6a02" stroke="#7fc160" stroke-width="1.5"/><text x="1692.1" y="532.0" font-family="Liberation Sans, sans-serif" font-size="18.5" fill="#e4f2cf" stroke="#e4f2cf" stroke-width="0.5" text-anchor="middle">1</text><circle cx="1786.7" cy="525.5" r="30" fill="#1b6a02" stroke="#7fc160" stroke-width="1.5"/><text x="1786.7" y="532.0" font-family="Liberation Sans, sans-serif" font-size="18.5" fill="#e4f2cf" stroke="#e4f2cf" stroke-width="0.5" text-anchor="middle">1</text><circle cx="1881.3" cy="525.5" r="30" fill="#1b6a02" stroke="#7fc160" stroke-width="1.5"/><text x="1881.3" y="532.0" font-family="Liberation Sans, sans-serif" font-size="18.5" fill="#e4f2cf" stroke="#e4f2cf" stroke-width="0.5" text-anchor="middle">1</text><circle cx="1124.5" cy="620.0" r="30" fill="#5b8a15" stroke="#a8d070" stroke-width="1.5"/><text x="1124.5" y="626.5" font-family="Liberation Sans, sans-serif" font-size="18.5" fill="#e4f2cf" stroke="#e4f2cf" stroke-width="0.5" text-anchor="middle">2</text><circle cx="1219.1" cy="620.0" r="30" fill="#d24a12" stroke="#f08050" stroke-width="1.5"/><text x="1219.1" y="626.5" font-family="Liberation Sans, sans-serif" font-size="18.5" fill="#e4f2cf" stroke="#e4f2cf" stroke-width="0.5" text-anchor="middle">8</text><circle cx="1313.7" cy="620.0" r="30" fill="#c41a0e" stroke="#f07060" stroke-width="1.5"/><text x="1313.7" y="626.5" font-family="Liberation Sans, sans-serif" font-size="18.5" fill="#e4f2cf" stroke="#e4f2cf" stroke-width="0.5" text-anchor="middle">11</text><circle cx="1408.3" cy="620.0" r="30" fill="#5b8a15" stroke="#a8d070" stroke-width="1.5"/><text x="1408.3" y="626.5" font-family="Liberation Sans, sans-serif" font-size="18.5" fill="#e4f2cf" stroke="#e4f2cf" stroke-width="0.5" text-anchor="middle">2</text><circle cx="1502.9" cy="620.0" r="30" fill="#1b6a02" stroke="#7fc160" stroke-width="1.5"/><text x="1502.9" y="626.5" font-family="Liberation Sans, sans-serif" font-size="18.5" fill="#e4f2cf" stroke="#e4f2cf" stroke-width="0.5" text-anchor="middle">1</text><circle cx="1597.5" cy="620.0" r="30" fill="#1b6a02" stroke="#7fc160" stroke-width="1.5"/><text x="1597.5" y="626.5" font-family="Liberation Sans, sans-serif" font-size="18.5" fill="#e4f2cf" stroke="#e4f2cf" stroke-width="0.5" text-anchor="middle">1</text><circle cx="1692.1" cy="620.0" r="30" fill="#1b6a02" stroke="#7fc160" stroke-width="1.5"/><text x="1692.1" y="626.5" font-family="Liberation Sans, sans-serif" font-size="18.5" fill="#e4f2cf" stroke="#e4f2cf" stroke-width="0.5" text-anchor="middle">1</text><circle cx="1786.7" cy="620.0" r="30" fill="#1b6a02" stroke="#7fc160" stroke-width="1.5"/><text x="1786.7" y="626.5" font-family="Liberation Sans, sans-serif" font-size="18.5" fill="#e4f2cf" stroke="#e4f2cf" stroke-width="0.5" text-anchor="middle">1</text><circle cx="1881.3" cy="620.0" r="30" fill="#1b6a02" stroke="#7fc160" stroke-width="1.5"/><text x="1881.3" y="626.5" font-family="Liberation Sans, sans-serif" font-size="18.5" fill="#e4f2cf" stroke="#e4f2cf" stroke-width="0.5" text-anchor="middle">1</text><circle cx="1124.5" cy="714.5" r="30" fill="#5b8a15" stroke="#a8d070" stroke-width="1.5"/><text x="1124.5" y="721.0" font-family="Liberation Sans, sans-serif" font-size="18.5" fill="#e4f2cf" stroke="#e4f2cf" stroke-width="0.5" text-anchor="middle">2</text><circle cx="1219.1" cy="714.5" r="30" fill="#d24a12" stroke="#f08050" stroke-width="1.5"/><text x="1219.1" y="721.0" font-family="Liberation Sans, sans-serif" font-size="18.5" fill="#e4f2cf" stroke="#e4f2cf" stroke-width="0.5" text-anchor="middle">8</text><circle cx="1313.7" cy="714.5" r="30" fill="#c41a0e" stroke="#f07060" stroke-width="1.5"/><text x="1313.7" y="721.0" font-family="Liberation Sans, sans-serif" font-size="18.5" fill="#e4f2cf" stroke="#e4f2cf" stroke-width="0.5" text-anchor="middle">10</text><circle cx="1408.3" cy="714.5" r="30" fill="#eea21e" stroke="#f8d070" stroke-width="1.5"/><text x="1408.3" y="721.0" font-family="Liberation Sans, sans-serif" font-size="18.5" fill="#e4f2cf" stroke="#e4f2cf" stroke-width="0.5" text-anchor="middle">6</text><circle cx="1502.9" cy="714.5" r="30" fill="#1b6a02" stroke="#7fc160" stroke-width="1.5"/><text x="1502.9" y="721.0" font-family="Liberation Sans, sans-serif" font-size="18.5" fill="#e4f2cf" stroke="#e4f2cf" stroke-width="0.5" text-anchor="middle">1</text><circle cx="1597.5" cy="714.5" r="30" fill="#1b6a02" stroke="#7fc160" stroke-width="1.5"/><text x="1597.5" y="721.0" font-family="Liberation Sans, sans-serif" font-size="18.5" fill="#e4f2cf" stroke="#e4f2cf" stroke-width="0.5" text-anchor="middle">1</text><circle cx="1692.1" cy="714.5" r="30" fill="#1b6a02" stroke="#7fc160" stroke-width="1.5"/><text x="1692.1" y="721.0" font-family="Liberation Sans, sans-serif" font-size="18.5" fill="#e4f2cf" stroke="#e4f2cf" stroke-width="0.5" text-anchor="middle">1</text><circle cx="1786.7" cy="714.5" r="30" fill="#1b6a02" stroke="#7fc160" stroke-width="1.5"/><text x="1786.7" y="721.0" font-family="Liberation Sans, sans-serif" font-size="18.5" fill="#e4f2cf" stroke="#e4f2cf" stroke-width="0.5" text-anchor="middle">1</text><circle cx="1881.3" cy="714.5" r="30" fill="#1b6a02" stroke="#7fc160" stroke-width="1.5"/><text x="1881.3" y="721.0" font-family="Liberation Sans, sans-serif" font-size="18.5" fill="#e4f2cf" stroke="#e4f2cf" stroke-width="0.5" text-anchor="middle">1</text><circle cx="1124.5" cy="809.0" r="30" fill="#1b6a02" stroke="#7fc160" stroke-width="1.5"/><text x="1124.5" y="815.5" font-family="Liberation Sans, sans-serif" font-size="18.5" fill="#e4f2cf" stroke="#e4f2cf" stroke-width="0.5" text-anchor="middle">1</text><circle cx="1219.1" cy="809.0" r="30" fill="#eea21e" stroke="#f8d070" stroke-width="1.5"/><text x="1219.1" y="815.5" font-family="Liberation Sans, sans-serif" font-size="18.5" fill="#e4f2cf" stroke="#e4f2cf" stroke-width="0.5" text-anchor="middle">6</text><circle cx="1313.7" cy="809.0" r="30" fill="#df6b14" stroke="#f5a060" stroke-width="1.5"/><text x="1313.7" y="815.5" font-family="Liberation Sans, sans-serif" font-size="18.5" fill="#e4f2cf" stroke="#e4f2cf" stroke-width="0.5" text-anchor="middle">7</text><circle cx="1408.3" cy="809.0" r="30" fill="#9aa21e" stroke="#d8dc70" stroke-width="1.5"/><text x="1408.3" y="815.5" font-family="Liberation Sans, sans-serif" font-size="18.5" fill="#e4f2cf" stroke="#e4f2cf" stroke-width="0.5" text-anchor="middle">3</text><circle cx="1502.9" cy="809.0" r="30" fill="#1b6a02" stroke="#7fc160" stroke-width="1.5"/><text x="1502.9" y="815.5" font-family="Liberation Sans, sans-serif" font-size="18.5" fill="#e4f2cf" stroke="#e4f2cf" stroke-width="0.5" text-anchor="middle">1</text><circle cx="1597.5" cy="809.0" r="30" fill="#1b6a02" stroke="#7fc160" stroke-width="1.5"/><text x="1597.5" y="815.5" font-family="Liberation Sans, sans-serif" font-size="18.5" fill="#e4f2cf" stroke="#e4f2cf" stroke-width="0.5" text-anchor="middle">1</text><circle cx="1692.1" cy="809.0" r="30" fill="#1b6a02" stroke="#7fc160" stroke-width="1.5"/><text x="1692.1" y="815.5" font-family="Liberation Sans, sans-serif" font-size="18.5" fill="#e4f2cf" stroke="#e4f2cf" stroke-width="0.5" text-anchor="middle">1</text><circle cx="1786.7" cy="809.0" r="30" fill="#1b6a02" stroke="#7fc160" stroke-width="1.5"/><text x="1786.7" y="815.5" font-family="Liberation Sans, sans-serif" font-size="18.5" fill="#e4f2cf" stroke="#e4f2cf" stroke-width="0.5" text-anchor="middle">1</text><circle cx="1881.3" cy="809.0" r="30" fill="#1b6a02" stroke="#7fc160" stroke-width="1.5"/><text x="1881.3" y="815.5" font-family="Liberation Sans, sans-serif" font-size="18.5" fill="#e4f2cf" stroke="#e4f2cf" stroke-width="0.5" text-anchor="middle">1</text><circle cx="1124.5" cy="903.5" r="30" fill="#1b6a02" stroke="#7fc160" stroke-width="1.5"/><text x="1124.5" y="910.0" font-family="Liberation Sans, sans-serif" font-size="18.5" fill="#e4f2cf" stroke="#e4f2cf" stroke-width="0.5" text-anchor="middle">1</text><circle cx="1219.1" cy="903.5" r="30" fill="#1b6a02" stroke="#7fc160" stroke-width="1.5"/><text x="1219.1" y="910.0" font-family="Liberation Sans, sans-serif" font-size="18.5" fill="#e4f2cf" stroke="#e4f2cf" stroke-width="0.5" text-anchor="middle">1</text><circle cx="1313.7" cy="903.5" r="30" fill="#5b8a15" stroke="#a8d070" stroke-width="1.5"/><text x="1313.7" y="910.0" font-family="Liberation Sans, sans-serif" font-size="18.5" fill="#e4f2cf" stroke="#e4f2cf" stroke-width="0.5" text-anchor="middle">2</text><circle cx="1408.3" cy="903.5" r="30" fill="#1b6a02" stroke="#7fc160" stroke-width="1.5"/><text x="1408.3" y="910.0" font-family="Liberation Sans, sans-serif" font-size="18.5" fill="#e4f2cf" stroke="#e4f2cf" stroke-width="0.5" text-anchor="middle">1</text><circle cx="1502.9" cy="903.5" r="30" fill="#1b6a02" stroke="#7fc160" stroke-width="1.5"/><text x="1502.9" y="910.0" font-family="Liberation Sans, sans-serif" font-size="18.5" fill="#e4f2cf" stroke="#e4f2cf" stroke-width="0.5" text-anchor="middle">1</text><circle cx="1597.5" cy="903.5" r="30" fill="#1b6a02" stroke="#7fc160" stroke-width="1.5"/><text x="1597.5" y="910.0" font-family="Liberation Sans, sans-serif" font-size="18.5" fill="#e4f2cf" stroke="#e4f2cf" stroke-width="0.5" text-anchor="middle">1</text><circle cx="1692.1" cy="903.5" r="30" fill="#1b6a02" stroke="#7fc160" stroke-width="1.5"/><text x="1692.1" y="910.0" font-family="Liberation Sans, sans-serif" font-size="18.5" fill="#e4f2cf" stroke="#e4f2cf" stroke-width="0.5" text-anchor="middle">1</text><circle cx="1786.7" cy="903.5" r="30" fill="#1b6a02" stroke="#7fc160" stroke-width="1.5"/><text x="1786.7" y="910.0" font-family="Liberation Sans, sans-serif" font-size="18.5" fill="#e4f2cf" stroke="#e4f2cf" stroke-width="0.5" text-anchor="middle">1</text><circle cx="1881.3" cy="903.5" r="30" fill="#1b6a02" stroke="#7fc160" stroke-width="1.5"/><text x="1881.3" y="910.0" font-family="Liberation Sans, sans-serif" font-size="18.5" fill="#e4f2cf" stroke="#e4f2cf" stroke-width="0.5" text-anchor="middle">1</text><circle cx="1124.5" cy="998.0" r="30" fill="#1b6a02" stroke="#7fc160" stroke-width="1.5"/><text x="1124.5" y="1004.5" font-family="Liberation Sans, sans-serif" font-size="18.5" fill="#e4f2cf" stroke="#e4f2cf" stroke-width="0.5" text-anchor="middle">1</text><circle cx="1219.1" cy="998.0" r="30" fill="#1b6a02" stroke="#7fc160" stroke-width="1.5"/><text x="1219.1" y="1004.5" font-family="Liberation Sans, sans-serif" font-size="18.5" fill="#e4f2cf" stroke="#e4f2cf" stroke-width="0.5" text-anchor="middle">1</text><circle cx="1313.7" cy="998.0" r="30" fill="#1b6a02" stroke="#7fc160" stroke-width="1.5"/><text x="1313.7" y="1004.5" font-family="Liberation Sans, sans-serif" font-size="18.5" fill="#e4f2cf" stroke="#e4f2cf" stroke-width="0.5" text-anchor="middle">1</text><circle cx="1408.3" cy="998.0" r="30" fill="#1b6a02" stroke="#7fc160" stroke-width="1.5"/><text x="1408.3" y="1004.5" font-family="Liberation Sans, sans-serif" font-size="18.5" fill="#e4f2cf" stroke="#e4f2cf" stroke-width="0.5" text-anchor="middle">1</text><circle cx="1502.9" cy="998.0" r="30" fill="#1b6a02" stroke="#7fc160" stroke-width="1.5"/><text x="1502.9" y="1004.5" font-family="Liberation Sans, sans-serif" font-size="18.5" fill="#e4f2cf" stroke="#e4f2cf" stroke-width="0.5" text-anchor="middle">1</text><circle cx="1597.5" cy="998.0" r="30" fill="#1b6a02" stroke="#7fc160" stroke-width="1.5"/><text x="1597.5" y="1004.5" font-family="Liberation Sans, sans-serif" font-size="18.5" fill="#e4f2cf" stroke="#e4f2cf" stroke-width="0.5" text-anchor="middle">1</text><circle cx="1692.1" cy="998.0" r="30" fill="#1b6a02" stroke="#7fc160" stroke-width="1.5"/><text x="1692.1" y="1004.5" font-family="Liberation Sans, sans-serif" font-size="18.5" fill="#e4f2cf" stroke="#e4f2cf" stroke-width="0.5" text-anchor="middle">1</text><circle cx="1786.7" cy="998.0" r="30" fill="#1b6a02" stroke="#7fc160" stroke-width="1.5"/><text x="1786.7" y="1004.5" font-family="Liberation Sans, sans-serif" font-size="18.5" fill="#e4f2cf" stroke="#e4f2cf" stroke-width="0.5" text-anchor="middle">1</text><circle cx="1881.3" cy="998.0" r="30" fill="#1b6a02" stroke="#7fc160" stroke-width="1.5"/><text x="1881.3" y="1004.5" font-family="Liberation Sans, sans-serif" font-size="18.5" fill="#e4f2cf" stroke="#e4f2cf" stroke-width="0.5" text-anchor="middle">1</text><circle cx="1124.5" cy="1092.5" r="30" fill="#1b6a02" stroke="#7fc160" stroke-width="1.5"/><text x="1124.5" y="1099.0" font-family="Liberation Sans, sans-serif" font-size="18.5" fill="#e4f2cf" stroke="#e4f2cf" stroke-width="0.5" text-anchor="middle">1</text><circle cx="1219.1" cy="1092.5" r="30" fill="#1b6a02" stroke="#7fc160" stroke-width="1.5"/><text x="1219.1" y="1099.0" font-family="Liberation Sans, sans-serif" font-size="18.5" fill="#e4f2cf" stroke="#e4f2cf" stroke-width="0.5" text-anchor="middle">1</text><circle cx="1313.7" cy="1092.5" r="30" fill="#1b6a02" stroke="#7fc160" stroke-width="1.5"/><text x="1313.7" y="1099.0" font-family="Liberation Sans, sans-serif" font-size="18.5" fill="#e4f2cf" stroke="#e4f2cf" stroke-width="0.5" text-anchor="middle">1</text><circle cx="1408.3" cy="1092.5" r="30" fill="#1b6a02" stroke="#7fc160" stroke-width="1.5"/><text x="1408.3" y="1099.0" font-family="Liberation Sans, sans-serif" font-size="18.5" fill="#e4f2cf" stroke="#e4f2cf" stroke-width="0.5" text-anchor="middle">1</text><circle cx="1502.9" cy="1092.5" r="30" fill="#1b6a02" stroke="#7fc160" stroke-width="1.5"/><text x="1502.9" y="1099.0" font-family="Liberation Sans, sans-serif" font-size="18.5" fill="#e4f2cf" stroke="#e4f2cf" stroke-width="0.5" text-anchor="middle">1</text><circle cx="1597.5" cy="1092.5" r="30" fill="#1b6a02" stroke="#7fc160" stroke-width="1.5"/><text x="1597.5" y="1099.0" font-family="Liberation Sans, sans-serif" font-size="18.5" fill="#e4f2cf" stroke="#e4f2cf" stroke-width="0.5" text-anchor="middle">1</text><circle cx="1692.1" cy="1092.5" r="30" fill="#1b6a02" stroke="#7fc160" stroke-width="1.5"/><text x="1692.1" y="1099.0" font-family="Liberation Sans, sans-serif" font-size="18.5" fill="#e4f2cf" stroke="#e4f2cf" stroke-width="0.5" text-anchor="middle">1</text><circle cx="1786.7" cy="1092.5" r="30" fill="#1b6a02" stroke="#7fc160" stroke-width="1.5"/><text x="1786.7" y="1099.0" font-family="Liberation Sans, sans-serif" font-size="18.5" fill="#e4f2cf" stroke="#e4f2cf" stroke-width="0.5" text-anchor="middle">1</text><circle cx="1881.3" cy="1092.5" r="30" fill="#1b6a02" stroke="#7fc160" stroke-width="1.5"/><text x="1881.3" y="1099.0" font-family="Liberation Sans, sans-serif" font-size="18.5" fill="#e4f2cf" stroke="#e4f2cf" stroke-width="0.5" text-anchor="middle">1</text></g></svg>
<div class="t" style="left:1052px;top:1380.2px;font-size:33.4px;font-weight:400;color:#808080;letter-spacing:0px;-webkit-text-stroke:0.3px #808080;">*N/A is when your location was not found in the top 20</div>
<div class="t" style="left:1052px;top:1418.7px;font-size:33.4px;font-weight:400;color:#808080;letter-spacing:0px;-webkit-text-stroke:0.3px #808080;">results. That means your business is not ranking for that</div>
<div class="box" style="left:1543px;top:1431px;width:480px;height:20px;background:#1f1f1f;border-top-left-radius:10px"></div>
<div class="box" style="left:1837px;top:1280px;width:127px;height:127px;border-radius:50%;background:#2f6fe0;box-shadow:0 3px 10px rgba(0,0,0,0.15)"></div>
<svg class="ab" style="left:1872px;top:1318px" width="56" height="54" viewBox="0 0 56 54"><path fill="#fff" d="M13.5 3.5 H43.5 Q52.5 3.5 52.5 12.5 V28.3 Q52.5 37.3 43.5 37.3 H18 L7.2 47.8 Q5 49.5 5 46.5 V12.5 Q5 3.5 13.5 3.5 Z"/></svg>
</body></html>
